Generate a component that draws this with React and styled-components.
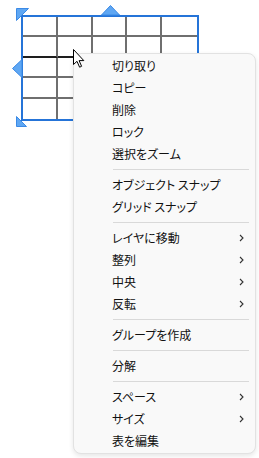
import styled, { createGlobalStyle } from 'styled-components'

const Global = createGlobalStyle`
	html, body {
		margin: 0;
		background: #ffffff;
	}
	body {
		font-family: "Noto Sans CJK JP", "Noto Sans", sans-serif;
	}
`

const Canvas = styled.div`
	position: relative;
	width: 259px;
	height: 458px;
	box-sizing: border-box;
	padding: 15px 0 0 21px;
	overflow: hidden;
	background: #ffffff;
`

// selection frame: the table plus its resize handles
const Selection = styled.div`
	position: relative;
	width: 178px;
	height: 106px;
`

const Table = styled.div`
	width: 100%;
	height: 100%;
	box-sizing: border-box;
	border: 2px solid #2574d8;
	display: grid;
	grid-template-columns: repeat(5, 1fr);
	grid-template-rows: repeat(5, 1fr);
	background: #ffffff;
`

const Cell = styled.div`
	border-right: ${p => (p.$lastCol ? 'none' : '2px solid #6f6f6f')};
	border-bottom: ${p => (p.$lastRow ? 'none' : `2px solid ${p.$dark ? '#1e1e1e' : '#6f6f6f'}`)};
`

const Handle = styled.svg`
	position: absolute;
	left: ${p => p.$x}px;
	top: ${p => p.$y}px;
	overflow: visible;
`

const Cursor = styled.svg`
	position: absolute;
	left: 73px;
	top: 49px;
	z-index: 2;
	overflow: visible;
`

const Menu = styled.ul`
	position: absolute;
	left: 73px;
	top: 53px;
	width: 183px;
	box-sizing: border-box;
	margin: 0;
	padding: 1px 0;
	list-style: none;
	background: #f9f9f9;
	border: 1px solid #e2e2e2;
	border-radius: 8px;
	box-shadow: 0 2px 5px rgba(0, 0, 0, 0.1);
`

const Item = styled.li`
	height: 22px;
	display: flex;
	align-items: center;
	justify-content: space-between;
	padding: 0 11px 0 38px;
	font-size: 12px;
	font-feature-settings: "palt";
	color: #111111;
	line-height: 22px;
	white-space: nowrap;
`

const Separator = styled.li`
	height: 9px;
	display: flex;
	align-items: center;
	padding: 0 6px 0 39px;
	&::after {
		content: '';
		flex: 1;
		height: 1px;
		background: #d9d9d9;
	}
`

const Chevron = () => (
	<svg width="5" height="8" viewBox="0 0 5 8">
		<path d="M1 1 L4 4 L1 7" fill="none" stroke="#333333" strokeWidth="1.1" />
	</svg>
)

const groups = [
	[['切り取り'], ['コピー'], ['削除'], ['ロック'], ['選択をズーム']],
	[['オブジェクト スナップ'], ['グリッド スナップ']],
	[['レイヤに移動', true], ['整列', true], ['中央', true], ['反転', true]],
	[['グループを作成']],
	[['分解']],
	[['スペース', true], ['サイズ', true], ['表を編集']],
]

const fill = '#5fa7f3'
const edge = '#3b8ae6'

export default function App() {
	const cells = []
	for (let r = 0; r < 5; r++) {
		for (let c = 0; c < 5; c++) {
			cells.push(<Cell key={`${r}-${c}`} $lastCol={c === 4} $lastRow={r === 4} $dark={r === 1} />)
		}
	}

	return (
		<Canvas>
			<Global />
			<Selection>
				<Table>{cells}</Table>
				<Handle $x={-5} $y={-7} width="13" height="13">
					<path d="M0.5 0.5 L12.5 0.5 L0.5 12.5 Z" fill={fill} stroke={edge} />
				</Handle>
				<Handle $x={80} $y={-10} width="19" height="10">
					<path d="M9.5 0.5 L18.5 10 L0.5 10 Z" fill={fill} stroke={edge} />
				</Handle>
				<Handle $x={-9} $y={44} width="10" height="19">
					<path d="M0.5 9.5 L10 0.5 L10 18.5 Z" fill={fill} stroke={edge} />
				</Handle>
				<Handle $x={-5} $y={101} width="11" height="11">
					<path d="M0.5 0.5 L10.5 10.5 L0.5 10.5 Z" fill={fill} stroke={edge} />
				</Handle>
			</Selection>

			<Menu>
				{groups.map((g, gi) => [
					gi > 0 && <Separator key={`s${gi}`} />,
					...g.map(([label, sub]) => (
						<Item key={label}>
							<span>{label}</span>
							{sub && <Chevron />}
						</Item>
					)),
				])}
			</Menu>

			<Cursor width="12" height="19" viewBox="0 0 12 19">
				<path
					d="M0.5 0.5 L0.5 15.5 L4 12.3 L6.6 18.2 L8.6 17.3 L6.1 11.6 L10.8 11.6 Z"
					fill="#ffffff"
					stroke="#000000"
					strokeWidth="1"
					strokeLinejoin="round"
				/>
			</Cursor>
		</Canvas>
	)
}
